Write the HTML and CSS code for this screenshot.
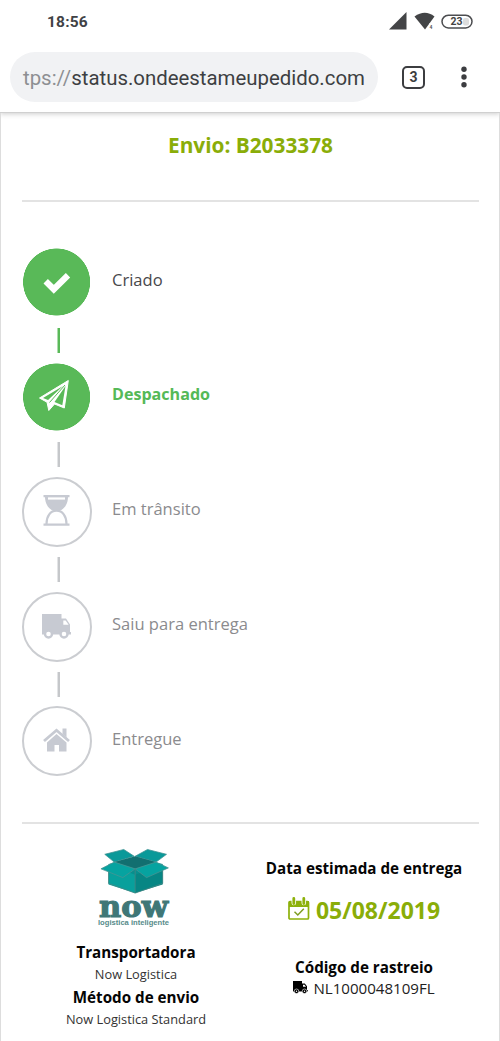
FILE: index.html
```html
<!DOCTYPE html>
<html lang="pt-BR">
<head>
<meta charset="utf-8">
<title>Status do pedido</title>
<link rel="stylesheet" href="styles.css">
</head>
<body>
<header class="browser">
  <div class="statusbar">
    <span class="clock">18:56</span>
    <svg class="signals" width="84" height="20" viewBox="0 0 84 20">
      <path d="M0 17.500 17.500 0v17.500z" fill="#434446"/>
      <path d="M25.500 4.500Q36-3 45.500 4.500L36 17.500z" fill="#434446"/>
      <path d="M40 11.500h6v6h-6z" fill="#fff"/>
      <text x="40.500" y="16.500" class="net">4</text>
      <rect x="53" y="3.300" width="30" height="12.600" rx="6.300" fill="#fff" stroke="#4c4d50" stroke-width="1.500"/>
      <rect x="74" y="6" width="6" height="7.500" rx="2" fill="#ddd"/>
      <text x="61.500" y="13.400" class="bat">23</text>
    </svg>
  </div>
  <div class="toolbar">
    <div class="url"><span class="scheme">tps://</span>status.ondeestameupedido.com</div>
    <div class="tabs">3</div>
    <svg class="menu" width="8" height="22" viewBox="0 0 8 22"><g fill="#3c3d40"><circle cx="4" cy="3.200" r="2.700"/><circle cx="4" cy="11" r="2.700"/><circle cx="4" cy="18.800" r="2.700"/></g></svg>
  </div>
</header>
<main class="page">
  <h1 class="title">Envio: B2033378</h1>
  <ol class="steps">
    <li class="step done">
      <div class="track"><div class="disc"><svg width="70" height="70" viewBox="0 0 70 70"><path d="M23.700 34.200 31.800 42.300 46 28.300" fill="none" stroke="#fff" stroke-width="6.200"/></svg></div><i class="link"></i></div>
      <span class="label">Criado</span>
    </li>
    <li class="step done current">
      <div class="track"><div class="disc"><svg width="70" height="70" viewBox="0 0 70 70"><path d="M17.500 36 46.300 18.500 42.300 46 32.500 42 26.800 48.500 25 40.200z" fill="#fff" stroke="#fff" stroke-linejoin="round"/><path d="M21 36 41 24 26 38zM43.500 24 40.300 43.200 32.500 40z" fill="#59b958"/><path d="M43 23 27.500 40.500" stroke="#59b958" stroke-width="1"/></svg></div><i class="link pending"></i></div>
      <span class="label">Despachado</span>
    </li>
    <li class="step">
      <div class="track"><div class="disc"><svg width="70" height="70" viewBox="0 0 70 70"><g fill="#c7cad2"><path d="M21.500 18h26v2.200h-26zM21.500 46.500h26v2.200h-26z"/><path d="M23 20h23c0 7-4 13-9.500 14h-4c-5.500-1-9.500-7-9.500-14z"/></g><path d="M26 21.500h17" stroke="#fff" stroke-width="2.200"/><path d="M24.500 47c0-8 4-13.300 10-13.300s10 5.300 10 13.300" fill="none" stroke="#c7cad2" stroke-width="2.200"/></svg></div><i class="link"></i></div>
      <span class="label">Em trânsito</span>
    </li>
    <li class="step">
      <div class="track"><div class="disc"><svg width="70" height="70" viewBox="0 0 70 70"><g transform="translate(20 22)"><path d="M0 0h19.500v4.500h4.500l4 6V18h1v2.500H0z" fill="#c7cad2"/><path d="M21.300 6.500h2.300l3 4.200h-5.300z" fill="#fff"/><g fill="#fff" stroke="#c7cad2" stroke-width="2.400"><circle cx="6.500" cy="20" r="3.500"/><circle cx="22" cy="20" r="3.500"/></g></g></svg></div><i class="link"></i></div>
      <span class="label">Saiu para entrega</span>
    </li>
    <li class="step">
      <div class="track"><div class="disc"><svg width="70" height="70" viewBox="0 0 70 70"><path d="M22 35 34.500 24.300 47 35" fill="none" stroke="#c7cad2" stroke-width="2.800"/><path d="M40.500 22.500h4v9l-4-3.500zM34.500 28l10 8.400V45.500H37v-6.500h-4.500v6.500H25v-9.100z" fill="#c7cad2"/></svg></div></div>
      <span class="label">Entregue</span>
    </li>
  </ol>
  <section class="details">
    <div class="carrier">
      <svg class="logo" width="76" height="80" viewBox="0 0 76 80">
        <g transform="translate(1 .5) scale(.95 .97)">
        <path d="M9 16 38 10 66 16V36L37 46 9 36z" fill="#078f8e"/>
        <path d="M9 17 37 27V46L9 37z" fill="#08a09c"/>
        <path d="M37 27 66 17V37L37 46z" fill="#078684"/>
        <path d="M5 6 25 1 36 8 15 14zM70 6 50 1 37 8 59 14z" fill="#0a9999" stroke="#3f9292" stroke-width=".8"/>
        <path d="M15 14 37 8 59 14 37 22z" fill="#126f70"/>
        <path d="M15 14 37 21 24 30 1 21zM59 14 37 21 49 30 72 20z" fill="#06a3a0" stroke="#4c9492" stroke-width=".8"/>
        <path d="M37 21V45M9 24V36L37 46 66 36V23" fill="none" stroke="#4c8583" stroke-width=".8"/>
        </g>
        <text class="brand" x="0" y="69" textLength="69" lengthAdjust="spacingAndGlyphs">now</text>
        <text class="tagline" x="-1" y="76.500" textLength="71" lengthAdjust="spacingAndGlyphs">logistica inteligente</text>
      </svg>
      <h2 class="heading">Transportadora</h2>
      <p class="value">Now Logistica</p>
      <h2 class="heading">Método de envio</h2>
      <p class="value">Now Logistica Standard</p>
    </div>
    <div class="delivery">
      <h2 class="heading">Data estimada de entrega</h2>
      <p class="date"><svg width="22" height="24" viewBox="0 0 22 24"><path d="M1 4h20v6H1z" fill="#8db10b"/><rect x="1" y="4.500" width="19.500" height="17.500" rx="1" fill="none" stroke="#8db10b" stroke-width="1.700"/><path d="M5.800 1v5M15.800 1v5" stroke="#fff" stroke-width="4.500" stroke-linecap="round"/><path d="M5.800 1.500v5M15.800 1.500v5" stroke="#8db10b" stroke-width="2.800" stroke-linecap="round"/><path d="M6.500 14.800 9.800 18 15.800 11.800" fill="none" stroke="#7f9d22" stroke-width="1.500"/></svg><span>05/08/2019</span></p>
      <h2 class="heading">Código de rastreio</h2>
      <p class="code"><svg width="15" height="13" viewBox="0 0 15 13"><path d="M0 0h9v2.500h2.800L14 5.300V9h.8v1.500H0z"/><path d="M10 3.700h1.500L13 5.800h-3z" fill="#fff"/><g stroke="#fff" stroke-width=".6"><circle cx="3.500" cy="10.300" r="2.300"/><circle cx="11.500" cy="10.300" r="2.300"/></g><g fill="#fff"><circle cx="3.500" cy="10.300" r=".7"/><circle cx="11.500" cy="10.300" r=".7"/></g></svg><span>NL1000048109FL</span></p>
    </div>
  </section>
</main>
</body>
</html>
```
FILE: styles.css
```css
* { box-sizing: border-box; }
body { margin: 0; width: 500px; height: 1041px; overflow: hidden; background: #fff; font-family: "Open Sans", sans-serif; display: flex; flex-direction: column; }
h1, h2, p, ol { margin: 0; padding: 0; }
svg { display: block; flex: none; }
.browser { height: 113px; flex: none; font-family: Roboto, sans-serif; border-bottom: 1px solid #d0d0d0; box-shadow: 0 1px 5px rgba(0,0,0,.2); }
.statusbar { height: 52px; display: flex; justify-content: space-between; padding: 12px 27px 0 47px; }
.clock { font-size: 15.5px; line-height: 21px; font-weight: 700; letter-spacing: .2px; color: #414245; }
.net { font: 700 5px Roboto, sans-serif; fill: #555; }
.bat { font: 700 10.5px Roboto, sans-serif; fill: #444; }
.toolbar { display: flex; align-items: center; height: 50px; padding-left: 10px; }
.url { width: 368px; height: 50px; border-radius: 25px; background: #f1f2f4; color: #3d3f42; font-size: 20.4px; line-height: 52px; padding-left: 13px; white-space: nowrap; }
.scheme { color: #8d8f92; }
.tabs { width: 23px; height: 23px; margin-left: 24px; border: 2px solid #3c3d40; border-radius: 5px; text-align: center; font-size: 14px; line-height: 19px; font-weight: 700; color: #3c3d40; }
.menu { margin-left: 35px; }
.page { flex: 1; border: solid #ddd; border-width: 0 1px; padding: 0 20px 0 21px; }
.title { height: 89px; padding-top: 18px; border-bottom: 2px solid #e3e3e3; color: #8aad08; font-size: 20.8px; line-height: 28px; font-weight: 700; text-align: center; }
.steps { list-style: none; height: 622px; padding-top: 45px; border-bottom: 2px solid #e3e3e3; }
.step { display: flex; height: 114.85px; color: #8b8b8e; }
.track { width: 70px; }
.disc { width: 70px; height: 70px; border: 2px solid #cbcdd1; border-radius: 50%; }
.disc svg { margin: -2px; }
.done .disc { border: 0; background: radial-gradient(circle at 34.6px 35px, #59b958 33.2px, transparent 33.8px); }
.done .disc svg { margin: 0; }
.link { display: block; width: 3px; height: 25px; margin: 10.5px 0 0 35px; background: linear-gradient(90deg, #e3e4e6 1px, #c5c7ca 1px); }
.done .link { background: linear-gradient(90deg, #acdcab 1px, #59b958 1px); }
.done .link.pending { background: linear-gradient(90deg, #e3e4e6 1px, #c5c7ca 1px); }
.label { margin-left: 20px; padding-top: 19.5px; font-size: 16.55px; line-height: 26px; }
.done .label { color: #48484b; }
.current .label { color: #55b957; font-size: 16.1px; font-weight: 700; }
.details { display: grid; grid-template-columns: 228px 228px; text-align: center; color: #111; }
.heading { font-size: 15.2px; line-height: 24px; font-weight: 700; color: #050505; white-space: nowrap; }
.value { font-size: 12.8px; line-height: 21px; color: #333; }
.carrier { padding-top: 24px; }
.logo { margin: 0 0 12px 77px; overflow: visible; }
.brand { font: 700 30px "DejaVu Serif", serif; fill: #3f7777; stroke: #3f7777; stroke-width: 1.2px; }
.tagline { font: 700 7px "Liberation Sans", sans-serif; fill: #568b8a; }
.delivery { padding-top: 32px; }
.date { display: flex; justify-content: center; gap: 6px; height: 34px; margin: 13px 0 28px; color: #8aad08; font-size: 23px; line-height: 34px; font-weight: 700; }
.date svg { margin-top: 4px; }
.code { display: flex; justify-content: center; gap: 5px; font-size: 15.1px; line-height: 18px; color: #222; }
.code svg { margin-top: 2px; }
```
